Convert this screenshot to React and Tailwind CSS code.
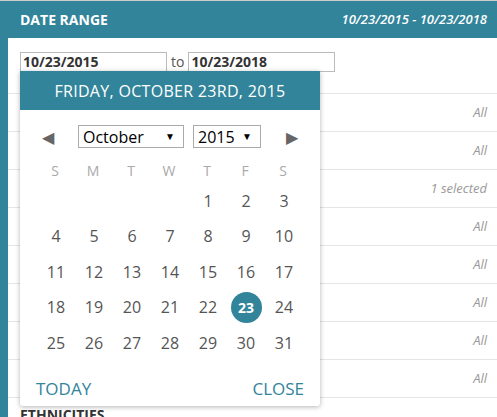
import { useState } from 'react'

const TEAL = 'bg-[#32849a]'

const rows = ['All', 'All', '1 selected', 'All', 'All', 'All', 'All', 'All']

const heads = ['S', 'M', 'T', 'W', 'T', 'F', 'S']

function buildDays() {
  // October 2015 starts on Thursday
  const cells = [null, null, null, null]
  for (let d = 1; d <= 31; d++) cells.push(d)
  return cells
}

function DatePicker() {
  const [selected] = useState(23)
  const days = buildDays()

  return (
    <div className="absolute left-[12px] top-[33px] w-[300px] bg-white rounded-b-[3px] shadow-[0_1px_5px_rgba(0,0,0,0.3)] z-10">
      <div className={`${TEAL} h-[39px] flex items-center justify-center text-white text-[16px] tracking-[0.3px]`}>
        FRIDAY, OCTOBER 23RD, 2015
      </div>

      <div className="flex items-center h-[23px] mt-[15px] px-[22px]">
        <span className="text-[#666] text-[16px] leading-none w-[36px]">◀</span>
        <div className="w-[106px] h-[23px] border border-[#aaa] flex items-center justify-between pl-[4px] pr-[8px] text-[16px] text-black">
          <span>October</span>
          <span className="text-[10px]">▼</span>
        </div>
        <div className="ml-[9px] w-[68px] h-[23px] border border-[#aaa] flex items-center justify-between pl-[4px] pr-[8px] text-[16px] text-black">
          <span>2015</span>
          <span className="text-[10px]">▼</span>
        </div>
        <span className="ml-auto text-[#666] text-[16px] leading-none">▶</span>
      </div>

      <div className="grid grid-cols-7 w-[266px] ml-[16px] mt-[11px]">
        {heads.map((h, i) => (
          <div key={i} className="h-[22px] flex items-center justify-center text-[14px] text-[#aaa]">
            {h}
          </div>
        ))}
      </div>

      <div className="grid grid-cols-7 w-[266px] ml-[17px] mt-[2px]">
        {days.map((d, i) => (
          <div key={i} className="h-[35.5px] flex items-center justify-center">
            {d === selected ? (
              <span className={`${TEAL} w-[31px] h-[31px] rounded-full flex items-center justify-center text-white text-[14px] font-bold`}>
                {d}
              </span>
            ) : (
              <span className="text-[16px] text-[#555]">{d}</span>
            )}
          </div>
        ))}
      </div>

      <div className="flex items-center justify-between px-[16px] pt-[17px] pb-[6px] text-[17px] leading-[22px] text-[#32849a]">
        <span>TODAY</span>
        <span>CLOSE</span>
      </div>
    </div>
  )
}

export default function App() {
  return (
    <div
      className={`${TEAL} w-[497px] h-[417px] overflow-hidden border-t border-[#ccc]`}
      style={{ fontFamily: '"Open Sans", "Liberation Sans", sans-serif' }}
    >
      <div className="h-[37px] flex items-center justify-between pl-[20px] pr-[10px] text-white">
        <span className="font-bold text-[14px]">DATE RANGE</span>
        <span className="italic font-semibold text-[13px]">10/23/2015 - 10/23/2018</span>
      </div>

      <div className="ml-[8px] bg-white h-[380px]">
        <div className="relative h-[56px] border-b border-[#e5e5e5] pl-[12px] pt-[13px]">
          <div className="flex items-center">
            <div className="w-[147px] h-[20px] border border-[#bbb] flex items-center px-[2px] text-[14px] font-bold text-[#333]">
              10/23/2015
            </div>
            <span className="mx-[4px] text-[14px] text-[#555]">to</span>
            <div className="w-[147px] h-[20px] border border-[#bbb] flex items-center px-[2px] text-[14px] font-bold text-[#333]">
              10/23/2018
            </div>
          </div>
          <DatePicker />
        </div>

        {rows.map((r, i) => (
          <div key={i} className="h-[38px] border-b border-[#e5e5e5] flex items-center justify-end pr-[10px] text-[13px] italic text-[#999]">
            {r}
          </div>
        ))}

        <div className="h-[38px] pl-[12px] pt-[6px] text-[14px] font-bold text-[#333]">ETHNICITIES</div>
      </div>
    </div>
  )
}
